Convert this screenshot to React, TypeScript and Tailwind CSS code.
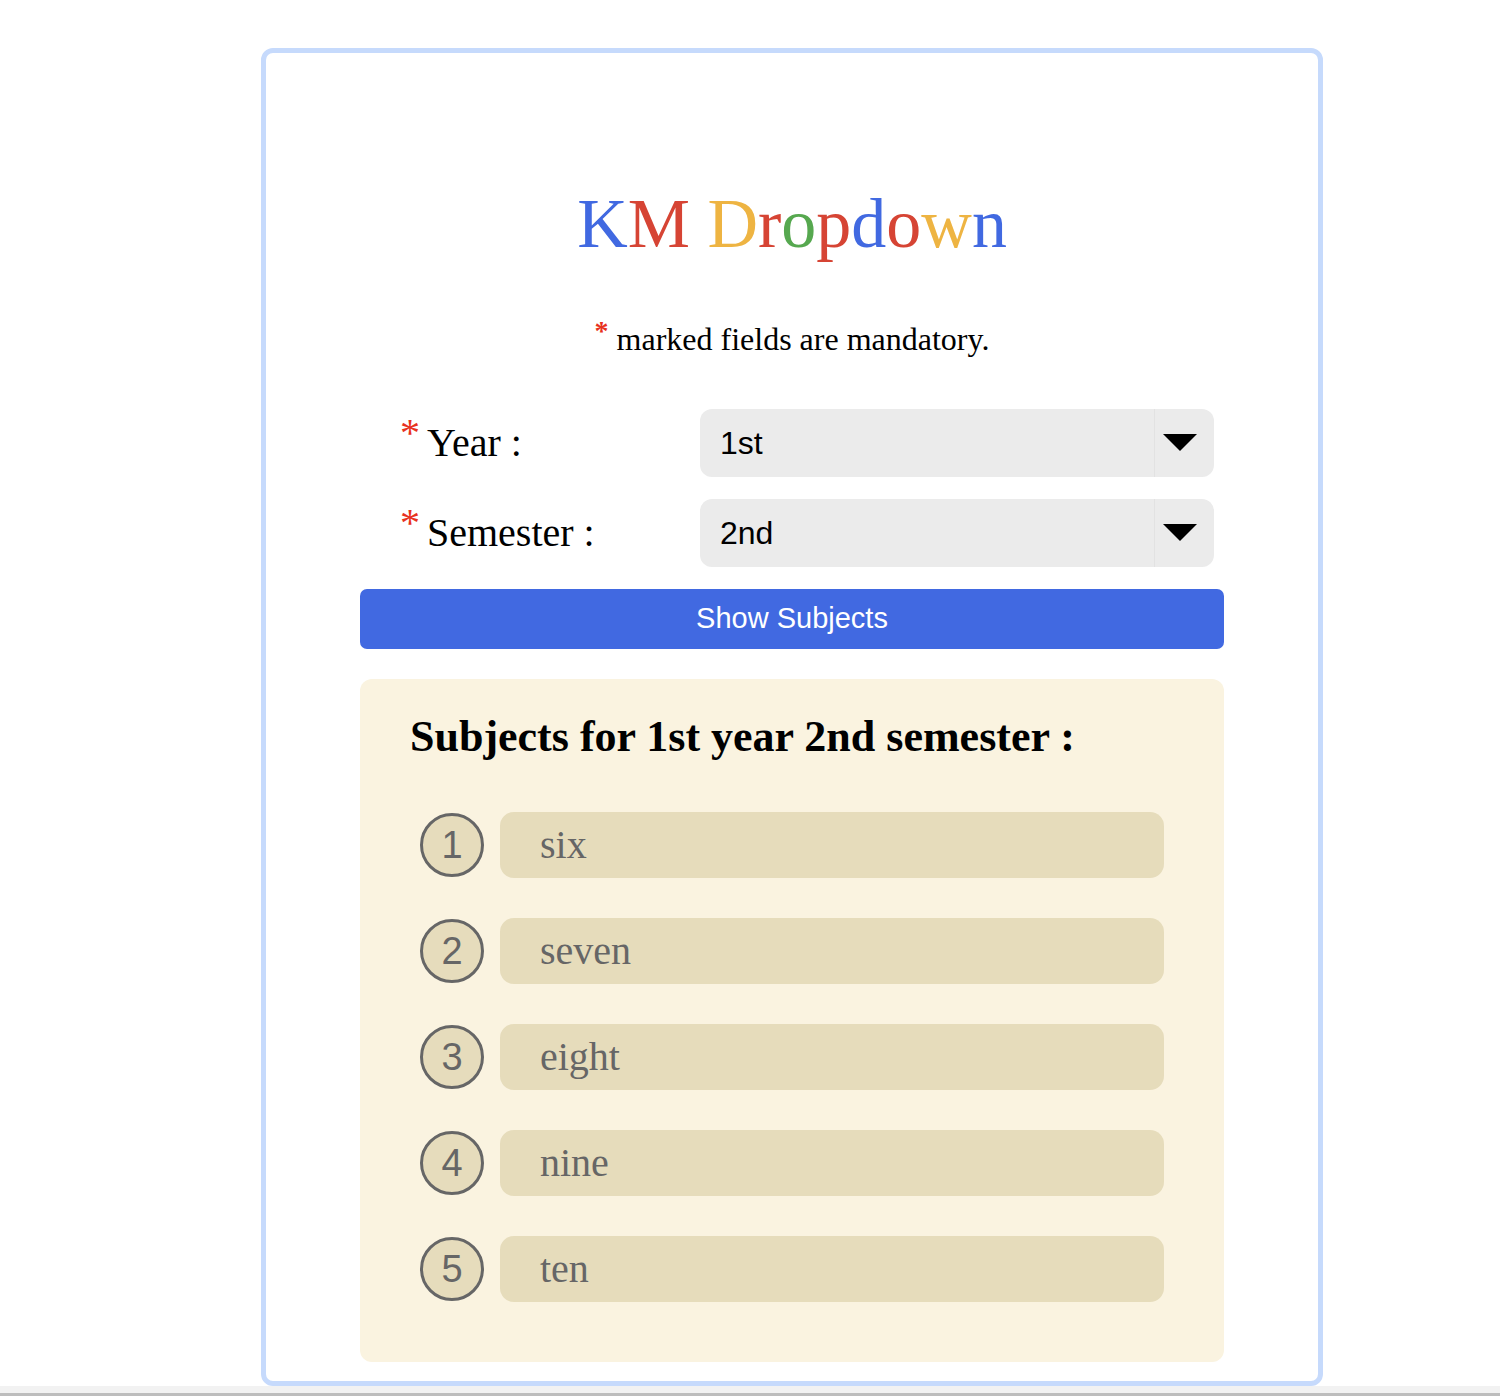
import { useState } from "react";

const years = ["1st", "2nd", "3rd", "4th"];
const semesters = ["1st", "2nd"];

const subjects = ["six", "seven", "eight", "nine", "ten"];

const titleLetters: [string, string][] = [
  ["K", "text-[#4169e1]"],
  ["M", "text-[#d64434]"],
  [" ", ""],
  ["D", "text-[#eeb442]"],
  ["r", "text-[#d64434]"],
  ["o", "text-[#56a84f]"],
  ["p", "text-[#d64434]"],
  ["d", "text-[#4169e1]"],
  ["o", "text-[#d64434]"],
  ["w", "text-[#eeb442]"],
  ["n", "text-[#4169e1]"],
];

const serif = "font-['Liberation_Serif',serif]";
const sans = "font-['Liberation_Sans',Arial,sans-serif]";

function FakeSelect({ value }: { value: string }) {
  return (
    <div className="flex h-[68px] w-[514px] items-stretch rounded-[12px] bg-[#ebebeb]">
      <div className={`flex flex-1 items-center pl-[20px] text-[32px] text-black ${sans}`}>{value}</div>
      <div className="flex w-[60px] items-center justify-center border-l border-[#e2e2e2] pr-[10px]">
        <svg width="34" height="18" viewBox="0 0 34 18">
          <polygon points="0,0 34,0 17,17" fill="#000" />
        </svg>
      </div>
    </div>
  );
}

function Field({ label, value }: { label: string; value: string }) {
  return (
    <div className="ml-[40px] flex items-center">
      <div className={`flex w-[300px] items-start text-[40px] text-black ${serif}`}>
        <span className="mr-[7px] mt-[-10px] text-[40px] leading-none text-[#e8321e]">*</span>
        <span className="leading-none">{label}</span>
      </div>
      <FakeSelect value={value} />
    </div>
  );
}

export default function App() {
  const [year] = useState(years[0]);
  const [sem] = useState(semesters[1]);

  return (
    <div className="flex h-[1396px] w-full flex-col bg-white">
      <div className="ml-[261px] mt-[48px] flex h-[1338px] w-[1062px] flex-col items-center rounded-[12px] border-[5px] border-[#c6dafc] bg-white">
        <h1 className={`mt-[136px] text-[70px] leading-none ${serif}`}>
          {titleLetters.map(([ch, color], i) => (
            <span key={i} className={color}>
              {ch}
            </span>
          ))}
        </h1>
        <p className={`mt-[64px] text-[32px] leading-none text-black ${serif}`}>
          <span className="relative top-[-10px] mr-[8px] text-[28px] font-bold text-[#e8321e]">*</span>
          marked fields are mandatory.
        </p>
        <div className="mt-[54px] flex w-[864px] flex-col">
          <div className="flex flex-col gap-[22px]">
            <Field label="Year :" value={year} />
            <Field label="Semester :" value={sem} />
          </div>
          <button
            className={`mt-[22px] h-[60px] w-full rounded-[7px] bg-[#4169e1] text-[29px] text-white ${sans}`}
          >
            Show Subjects
          </button>
          <div className="mt-[30px] flex flex-col rounded-[12px] bg-[#faf3e0] pb-[60px] pl-[50px] pr-[60px] pt-[30px]">
            <h2 className={`text-[44px] font-bold leading-tight text-black ${serif}`}>
              Subjects for {year} year {sem} semester :
            </h2>
            <ol className="mt-[48px] flex flex-col gap-[40px] pl-[10px]">
              {subjects.map((s, i) => (
                <li key={s} className="flex items-center gap-[16px]">
                  <span
                    className={`flex h-[64px] w-[64px] shrink-0 items-center justify-center rounded-full border-[3px] border-[#666] bg-[#e6dcbc] text-[38px] text-[#666] ${sans}`}
                  >
                    {i + 1}
                  </span>
                  <span
                    className={`flex h-[66px] flex-1 items-center rounded-[14px] bg-[#e6dcbb] pl-[40px] text-[40px] text-[#666] ${serif}`}
                  >
                    {s}
                  </span>
                </li>
              ))}
            </ol>
          </div>
        </div>
      </div>
      <div className="mt-auto h-[7px] w-full bg-[#f2f2f2]" />
      <div className="h-[3px] w-full bg-[#bdbdbd]" />
    </div>
  );
}
